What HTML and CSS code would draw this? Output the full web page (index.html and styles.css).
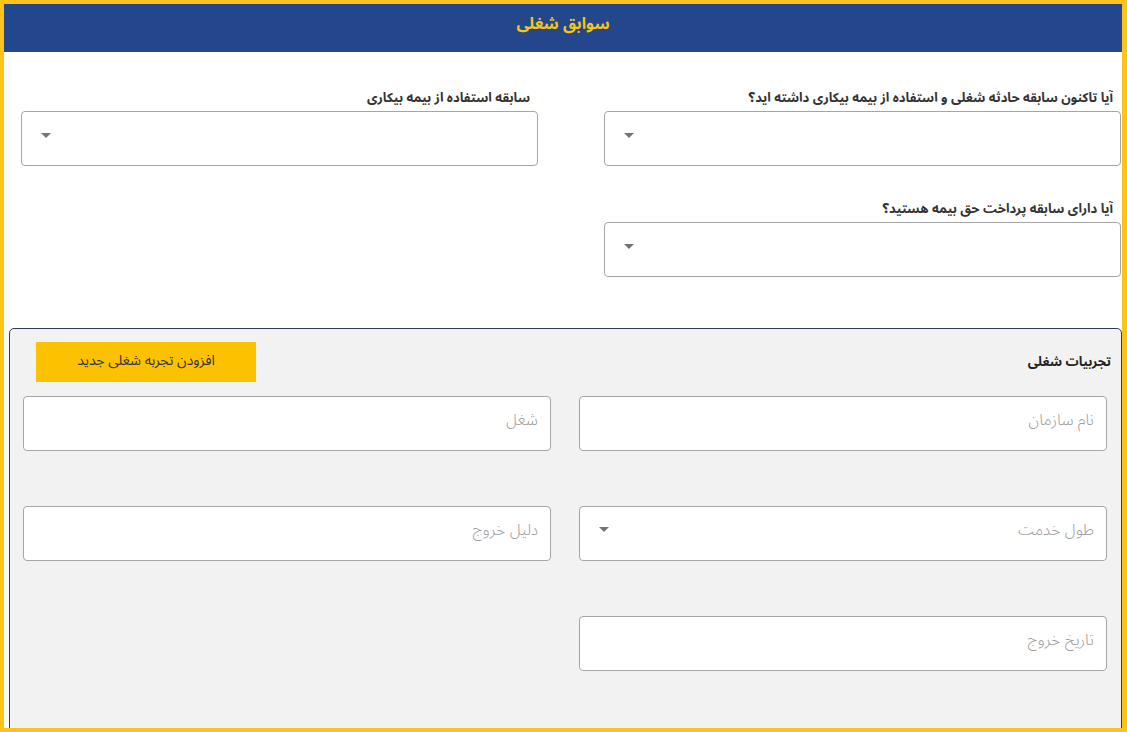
FILE: index.html
```html
<!DOCTYPE html>
<html lang="fa" dir="rtl">
<head>
  <meta charset="UTF-8">
  <title>سوابق شغلی</title>
  <link rel="stylesheet" href="styles.css">
</head>
<body>
  <div class="frame">
    <div class="page-head">سوابق شغلی</div>

    <div class="form-grid">
      <div class="field">
        <label>آیا تاکنون سابقه حادثه شغلی و استفاده از بیمه بیکاری داشته اید؟</label>
        <div class="select-box"><span class="arrow"></span></div>
      </div>
      <div class="field">
        <label>سابقه استفاده از بیمه بیکاری</label>
        <div class="select-box"><span class="arrow"></span></div>
      </div>
      <div class="field">
        <label>آیا دارای سابقه پرداخت حق بیمه هستید؟</label>
        <div class="select-box"><span class="arrow"></span></div>
      </div>
    </div>

    <div class="panel">
      <div class="panel-head">
        <span class="panel-title">تجربیات شغلی</span>
        <button class="add-btn">افزودن تجربه شغلی جدید</button>
      </div>
      <div class="panel-grid">
        <input class="text-box" type="text" placeholder="نام سازمان">
        <input class="text-box" type="text" placeholder="شغل">
        <div class="select-box plain">
          <span class="ph">طول خدمت</span>
          <span class="arrow"></span>
        </div>
        <input class="text-box" type="text" placeholder="دلیل خروج">
        <input class="text-box" type="text" placeholder="تاریخ خروج">
      </div>
    </div>
  </div>
</body>
</html>
```

FILE: styles.css
```css
:root {
  --yellow: #fcc419;
  --navy: #24468a;
  --box-border: #a6a6a6;
}

* {
  margin: 0;
  padding: 0;
  box-sizing: border-box;
}

html, body {
  height: 100%;
  background: #fff;
  font-family: "Noto Sans Arabic", "Vazirmatn", "DejaVu Sans", sans-serif;
  color: #333;
  overflow: hidden;
}

.frame {
  height: 732px;
  border: 4px solid var(--yellow);
  border-right-width: 5px;
  overflow: hidden;
}

/* Header */
.page-head {
  height: 48px;
  background: var(--navy);
  color: #f5c518;
  font-weight: 700;
  font-size: 16px;
  text-align: center;
  padding-top: 3px;
}

/* Top questions */
.form-grid {
  display: grid;
  grid-template-columns: 1fr 1fr;
  column-gap: 66px;
  row-gap: 33px;
  padding: 36px 1px 0 17px;
}
.field label {
  display: block;
  height: 20px;
  margin-bottom: 3px;
  padding-right: 8px;
  font-size: 13px;
  font-weight: 700;
  line-height: 20px;
  color: #333;
  white-space: nowrap;
}

.select-box {
  position: relative;
  height: 55px;
  background: #fff;
  border: 1px solid var(--box-border);
  border-radius: 4px;
  display: flex;
  align-items: center;
  justify-content: space-between;
  padding: 0 15px 6px 19px;
}
.select-box .arrow {
  margin-right: auto;
  width: 0;
  height: 0;
  border-left: 5px solid transparent;
  border-right: 5px solid transparent;
  border-top: 5px solid #757575;
}

/* Experience panel */
.panel {
  margin: 51px 0 0 5px;
  height: 420px;
  background: #f2f2f2;
  border: 1px solid #2c3b5c;
  border-radius: 5px;
  padding: 13px 14px 0 13px;
}
.panel-head {
  display: flex;
  align-items: center;
  justify-content: space-between;
  margin-right: -4px;
}
.panel-title {
  font-size: 13px;
  font-weight: 700;
  color: #222;
}
.add-btn {
  width: 220px;
  height: 40px;
  margin-left: 13px;
  padding-bottom: 4px;
  border: none;
  background: #fcc200;
  color: #333;
  font-family: inherit;
  font-size: 14px;
  cursor: pointer;
}

.panel-grid {
  display: grid;
  grid-template-columns: 1fr 1fr;
  column-gap: 28px;
  row-gap: 55px;
  margin-top: 14px;
}
.text-box {
  height: 55px;
  width: 100%;
  background: #fff;
  border: 1px solid var(--box-border);
  border-radius: 4px;
  padding: 0 12px 8px;
  font-family: inherit;
  font-size: 16px;
  color: #333;
  outline: none;
}
.text-box::placeholder,
.select-box .ph {
  color: #9c9c9c;
  font-weight: 300;
  font-size: 16px;
}
.select-box.plain {
  padding: 0 12px 8px 19px;
}
```
